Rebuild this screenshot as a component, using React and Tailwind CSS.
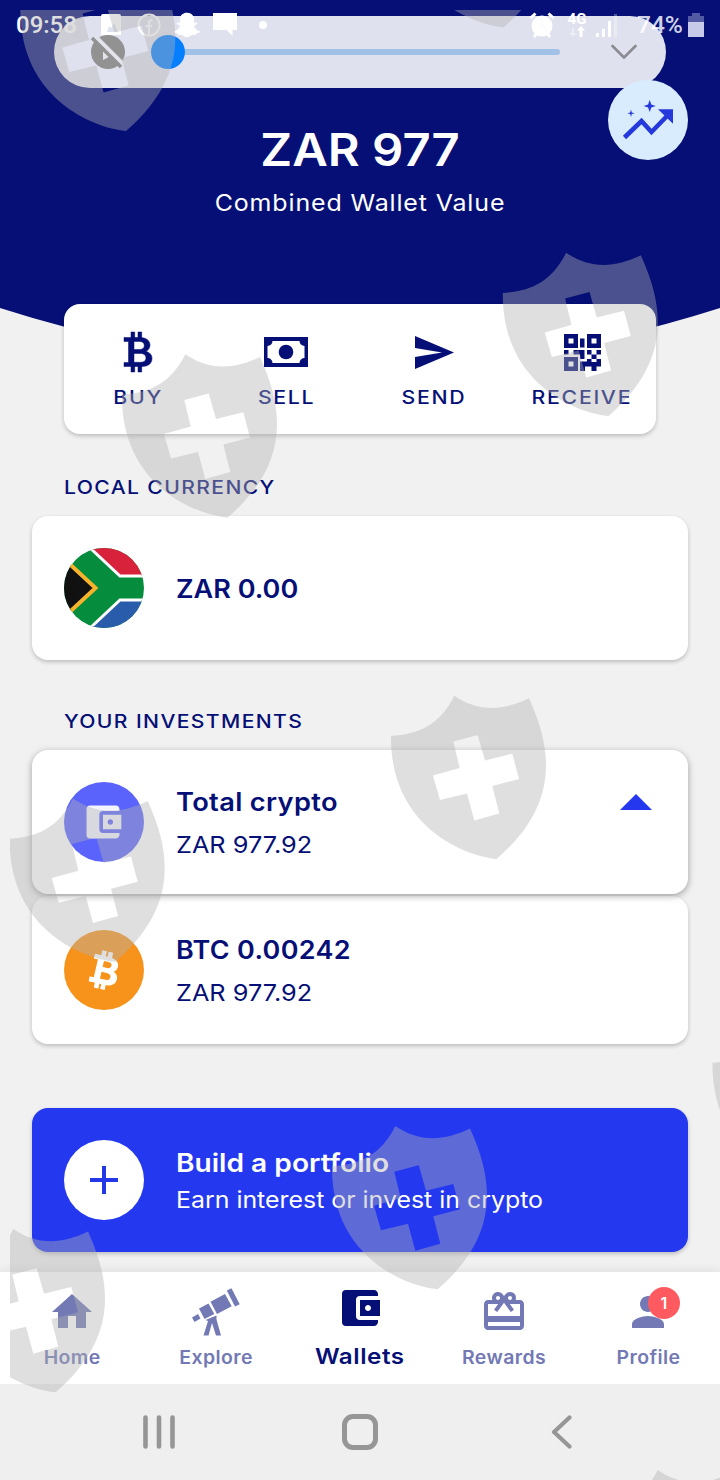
import React from "react";
import { MdHome, MdAccountBalanceWallet, MdCardGiftcard, MdPerson } from "react-icons/md";
import { FaSnapchatGhost } from "react-icons/fa";

const SHIELD =
  "M63.3 0C85 15 110 16.5 138 2.6C149 27 155 48 155 70C155 112 130 142 105.7 163.3C72 160 -1 130 0 40.3C28 38.5 49 29 63.3 0ZM62.3 45.7L68.7 72.3L42 79.7L49 104.3L76 97.7L83.3 124.7L108.3 117.7L101.3 90.3L128 83.3L121.3 58L94 64.7L86.7 39.3Z";

const SHIELDS = [
  [20.3, -32.3], [398, -136], [502.8, 252.7], [122, 354.3], [391, 695.7],
  [9.7, 798.4], [712.5, 1022.4], [332, 1126], [-50, 1229], [594.4, 1470],
];

function Watermark() {
  return (
    <svg className="pointer-events-none absolute inset-0 z-30" width="720" height="1480" viewBox="0 0 720 1480">
      <clipPath id="wm"><rect x="10" y="10" width="710" height="1470" /></clipPath>
      <g clipPath="url(#wm)" fill="#b2b2b2" fillOpacity="0.41" fillRule="evenodd">
        {SHIELDS.map(([x, y]) => (
          <path key={`${x}-${y}`} d={SHIELD} transform={`translate(${x} ${y})`} />
        ))}
      </g>
    </svg>
  );
}

function StatusBar() {
  return (
    <div className="flex h-[50px] items-center font-['Roboto',sans-serif] text-2xl font-medium text-white">
      <span className="ml-4 w-[84px]">09:58</span>
      <svg width="24" height="24" viewBox="0 0 24 24" fill="currentColor" fillRule="evenodd">
        <path d="M3 1h16a2 2 0 0 1 2 2v19H1V3a2 2 0 0 1 2-2zM7 19h11l-4-9-3 5-2-2z" />
      </svg>
      <svg className="ml-[13px]" width="24" height="24" viewBox="0 0 24 24" fill="none" stroke="currentColor" strokeWidth="2">
        <circle cx="12" cy="12" r="10.5" />
        <path d="M12 22V10q0-3 3.500-3M8.500 13h6.500" />
      </svg>
      <FaSnapchatGhost className="ml-[13px]" size={26} />
      <svg className="ml-[13px]" width="24" height="24" viewBox="0 0 24 24" fill="currentColor">
        <path d="M0 0h24v17h-4.500v6l-6-6H0z" />
      </svg>
      <span className="ml-[22px] h-2 w-2 rounded-full bg-white" />
      <svg className="ml-[262px]" width="26" height="26" viewBox="0 0 26 26" stroke="currentColor" fill="none">
        <circle cx="13" cy="14" r="10.500" fill="currentColor" stroke="none" />
        <path d="M1.500 6L6.500 1.500M19.500 1.500L24.500 6M5 25L8 21M21 25L18 21" strokeWidth="3" />
        <path d="M13 8V14.500L18 17" stroke="#dfe0ec" strokeWidth="2.600" />
      </svg>
      <span className="ml-[12px] flex w-[20px] flex-col items-center">
        <span className="text-[15px] leading-[13px] font-bold">4G</span>
        <svg width="16" height="12" viewBox="0 0 16 12" fill="currentColor">
          <path d="M4 11L0.500 7H3V2h2v5h2.500z" opacity=".4" />
          <path d="M12 0l4 4.500h-2.500V11h-3V4.500H8z" />
        </svg>
      </span>
      <svg className="ml-[8px]" width="24" height="24" viewBox="0 0 24 24" fill="currentColor">
        <path d="M1 20h3v4H1zM7 16h3v8H7zM13 8h3v16h-3z" />
        <path d="M19 1h3v23h-3z" opacity=".3" />
      </svg>
      <span className="ml-[18px] w-[49px] text-[24.5px] text-[#cfd1e8]">74%</span>
      <svg className="ml-[2px]" width="16" height="24" viewBox="0 0 16 24" fill="#c8caea">
        <path d="M4 0h8v3h4v6H0V3h4z" opacity=".4" />
        <path d="M0 9h16v15H0z" />
      </svg>
    </div>
  );
}

function VolumePill() {
  return (
    <div className="absolute top-4 left-[54px] z-10 flex h-[72px] w-[612px] items-center rounded-full bg-white/88">
      <svg className="ml-[36px]" width="36" height="36" viewBox="0 0 36 36">
        <circle cx="18" cy="18" r="17" fill="#929292" />
        <path d="M13 14l12 6-12 6z" fill="#e3e3ec" />
        <path d="M5 2L34 31" stroke="#e3e3ec" strokeWidth="4" />
        <path d="M2 4L31 33" stroke="#929292" strokeWidth="3.500" />
      </svg>
      <span className="ml-[25px] h-[34px] w-[34px] shrink-0 rounded-full bg-[#067fff]" />
      <span className="h-1.5 w-[375px] rounded-r-full bg-[#a1c1e6]" />
      <svg className="ml-[50px]" width="28" height="16" viewBox="0 0 28 16" fill="none" stroke="#8c8c94" strokeWidth="2.700" strokeLinecap="round" strokeLinejoin="round">
        <path d="M2.500 2L14 13.500L25.500 2" />
      </svg>
    </div>
  );
}

function InsightsButton() {
  return (
    <div className="absolute top-20 left-[608px] z-20 h-20 w-20 rounded-full bg-[#d9ecfe]">
      <svg width="80" height="80" viewBox="0 0 80 80">
        <path d="M16.500 57.500L33.500 41L43.500 52L60 35" fill="none" stroke="#2538dc" strokeWidth="4.600" />
        <path d="M50 29.300h15v14.500z" fill="#2538dc" />
        <path d="M41.700 20l1.600 4.400 4.400 1.600-4.400 1.600-1.600 4.400-1.600-4.400-4.400-1.600 4.400-1.600z" fill="#2538dc" />
        <path d="M23 29.500l.8 3 3 .8-3 .8-.8 3-.8-3-3-.8 3-.8z" fill="#2538dc" />
      </svg>
    </div>
  );
}

function BitcoinSign({ width, height, weight = 0, className }) {
  return (
    <svg className={className} width={width} height={height} viewBox="-1 -1 30 42" fill="currentColor" stroke="currentColor" strokeWidth={weight}>
      <path
        fillRule="evenodd"
        d="M0 5.500H16C22 5.500 26 8.500 26 13C26 16 24.500 18 22 19.300C26 20.500 28 23 28 26.500C28 31.500 24 34.500 18 34.500H0V30.500H4.500V9.500H0ZM10 9.500V17.500H15.500C18.500 17.500 20.300 16 20.300 13.500C20.300 11 18.500 9.500 15.500 9.500ZM10 21.500V30.300H16.500C20 30.300 22 28.800 22 26C22 23 20 21.500 16.500 21.500Z"
      />
      <path d="M7 0h3.700v6H7zM14 0h3.700v6H14zM7 34h3.700v6H7zM14 34h3.700v6H14z" />
    </svg>
  );
}

function CashIcon() {
  return (
    <svg width="44" height="30" viewBox="0 0 44 30">
      <path d="M0 0h44v30H0z" fill="#050f76" />
      <path d="M8.500 4h27a5 5 0 0 0 5 5v12a5 5 0 0 0-5 5h-27a5 5 0 0 0-5-5V9a5 5 0 0 0 5-5z" fill="#fff" />
      <circle cx="22" cy="15" r="7.300" fill="#050f76" />
    </svg>
  );
}

function SendIcon() {
  return (
    <svg width="39" height="33" viewBox="0 0 39 33" fill="#050f76">
      <path d="M0 0L39 16.500L0 33V21L27 16.500L0 12z" />
    </svg>
  );
}

function QrIcon() {
  return (
    <svg width="37" height="37" viewBox="0 0 37 37" fill="#050f76" fillRule="evenodd">
      <path d="M0 0h14v14H0zM4.500 4.500v5h5v-5zM23 0h14v14H23zM27.500 4.500v5h5v-5zM0 23h14v14H0zM4.500 27.500v5h5v-5z" />
      <path d="M16 4.500h4.500v9H16zM0 16h4.500v4.500H0zM9.500 16h11v9H16v-4.500H9.500zM23 16h4.500v4.500H23zM32.500 16H37v4.500h-4.500zM27.500 20.500h5V25h-5zM23 25h4.500v3H32.500v-3H37v7.500h-4.500V37h-5v-4.500h-6.500V37H16v-9.500h7z" />
    </svg>
  );
}

function Action({ icon, label }) {
  return (
    <div className="flex w-[148px] flex-col items-center pt-[22px]">
      <div className="flex h-[52px] items-center justify-center">{icon}</div>
      <span className="mt-[8px] -mr-[0.5px] scale-x-[1.12] text-[19px] leading-6 font-medium tracking-[1.5px]">{label}</span>
    </div>
  );
}

function SectionTitle({ children }) {
  return <h2 className="ml-16 w-fit origin-left scale-x-[1.11] text-[19px] leading-6 font-medium tracking-[1.25px]">{children}</h2>;
}

function FlagIcon() {
  return (
    <svg width="80" height="80" viewBox="0 0 80 80">
      <clipPath id="flag"><circle cx="40" cy="40" r="40" /></clipPath>
      <g clipPath="url(#flag)">
        <path d="M0 0h80v80H0z" fill="#058c3c" />
        <path d="M26 0L56 28H80V0z" fill="#d8213b" />
        <path d="M26 80L56 52H80V80z" fill="#2a5cac" />
        <path d="M25 -1L56 28H80M25 81L56 52H80" fill="none" stroke="#fff" strokeWidth="3" />
        <path d="M-3 8L31.500 40L-3 72z" fill="#111" stroke="#f7b32b" strokeWidth="4" />
      </g>
    </svg>
  );
}

function TelescopeIcon() {
  return (
    <svg width="48" height="48" viewBox="0 0 48 48" fill="#7279b4">
      <path d="M34.800 2.500L39.500 0.300L47.700 16.200L43 18.500z" />
      <path d="M18.500 13.800L33 6L39.700 18.300L25 26z" />
      <path d="M7 20.500L16.500 15.500L22.300 26L12.500 31z" />
      <path d="M0 29.500L6 26L8.500 30.500L2.500 34z" />
      <path d="M13.500 32L24.500 27.500V31.500L29 47.500H24L20 35L16.500 47.500H11.500L16 33z" />
    </svg>
  );
}

function NavItem({ icon, label, active }) {
  return (
    <div className={active ? "flex w-36 flex-col items-center pt-3 text-[#050f76]" : "flex w-36 flex-col items-center pt-4 text-[#7279b4]"}>
      {icon}
      <span className={active ? "mt-[10px] scale-x-[1.1] text-[22px] leading-7 font-semibold tracking-[0.5px]" : "mt-[7px] scale-x-[1.05] text-[18.5px] leading-7 font-semibold tracking-[0.4px]"}>{label}</span>
    </div>
  );
}

const cardShadow = "shadow-[0_2px_4px_rgba(0,0,0,0.22)]";

export default function App() {
  return (
    <div className="relative flex h-[1480px] w-[720px] flex-col overflow-hidden bg-[#f1f1f1] font-['Inter',sans-serif] text-[#050f76]">
      <svg className="absolute top-0 left-0" width="720" height="370" viewBox="0 0 720 370">
        <path d="M0 0H720V308Q360 423 0 308Z" fill="#050f76" />
      </svg>
      <header className="relative h-[304px] text-white">
        <StatusBar />
        <h1 className="mt-[72px] scale-x-[1.088] text-center text-[45px] leading-[56px] font-semibold">ZAR 977</h1>
        <p className="mt-[11px] scale-x-[1.085] text-center text-[23px] leading-7 tracking-[0.8px]">Combined Wallet Value</p>
      </header>
      <VolumePill />
      <InsightsButton />

      <section className={`relative mx-16 flex h-[130px] rounded-2xl bg-white ${cardShadow}`}>
        <Action label="BUY" icon={<BitcoinSign width={30} height={42} weight={0.5} />} />
        <Action label="SELL" icon={<CashIcon />} />
        <Action label="SEND" icon={<SendIcon />} />
        <Action label="RECEIVE" icon={<QrIcon />} />
      </section>

      <div className="mt-[42px]"><SectionTitle>LOCAL CURRENCY</SectionTitle></div>
      <section className={`mx-8 mt-[16px] flex h-36 items-center gap-8 rounded-2xl bg-white px-8 ${cardShadow}`}>
        <FlagIcon />
        <span className="mt-[3px] origin-left scale-x-[1.08] text-[25px] font-semibold">ZAR 0.00</span>
      </section>

      <div className="mt-[50px]"><SectionTitle>YOUR INVESTMENTS</SectionTitle></div>
      <section className="relative mx-8 mt-[16px] flex h-36 gap-8 rounded-2xl bg-white px-8 pt-8 shadow-[0_2px_7px_rgba(0,0,0,0.35)]">
        <div className="flex h-20 w-20 items-center justify-center rounded-full bg-[#5a63fb] text-[#f4f4ff]">
          <MdAccountBalanceWallet className="-translate-x-px" size={44} />
        </div>
        <div className="flex flex-1 flex-col items-start pt-0.5">
          <span className="origin-left scale-x-[1.09] text-[25px] leading-9 font-semibold tracking-[0.3px]">Total crypto</span>
          <span className="mt-[9px] origin-left scale-x-[1.1] text-[23px] leading-8">ZAR 977.92</span>
        </div>
        <svg className="mt-3 mr-1" width="32" height="16" viewBox="0 0 32 16"><path d="M0 16L16 0L32 16z" fill="#2538f0" /></svg>
      </section>
      <section className={`mx-8 mt-0.5 flex h-[148px] gap-8 rounded-2xl bg-white px-8 pt-[34px] ${cardShadow}`}>
        <div className="flex h-20 w-20 items-center justify-center rounded-full bg-[#f7931a] text-white">
          <BitcoinSign className="translate-x-px rotate-[13deg]" width={28} height={39} weight={1.3} />
        </div>
        <div className="flex flex-col items-start pt-0.5">
          <span className="origin-left scale-x-[1.077] text-[25px] leading-9 font-semibold tracking-[0.3px]">BTC 0.00242</span>
          <span className="mt-[9px] origin-left scale-x-[1.1] text-[23px] leading-8">ZAR 977.92</span>
        </div>
      </section>

      <section className={`mx-8 mt-16 flex h-36 gap-8 rounded-2xl bg-[#2438f0] px-8 pt-8 text-white ${cardShadow}`}>
        <div className="flex h-20 w-20 items-center justify-center rounded-full bg-white">
          <svg width="28" height="28" viewBox="0 0 28 28" stroke="#2438e8" strokeWidth="4"><path d="M14 0V28M0 14H28" /></svg>
        </div>
        <div className="flex flex-col items-start pt-[5px]">
          <span className="origin-left scale-x-[1.125] text-[25px] leading-9 font-semibold">Build a portfolio</span>
          <span className="mt-[3px] origin-left scale-x-[1.082] text-[23px] leading-8">Earn interest or invest in crypto</span>
        </div>
      </section>

      <nav className="mt-5 flex h-28 shrink-0 bg-white shadow-[0_-3px_9px_rgba(0,0,0,0.06)]">
        <NavItem label="Home" icon={<MdHome size={48} />} />
        <NavItem label="Explore" icon={<TelescopeIcon />} />
        <NavItem active label="Wallets" icon={<MdAccountBalanceWallet size={48} />} />
        <NavItem label="Rewards" icon={<MdCardGiftcard size={48} />} />
        <NavItem
          label="Profile"
          icon={
            <span className="relative">
              <MdPerson size={48} />
              <span className="absolute -top-[1px] left-6 flex h-8 w-8 items-center justify-center rounded-full bg-[#ff5a5f] text-base font-semibold text-white">1</span>
            </span>
          }
        />
      </nav>

      <footer className="relative flex h-24 shrink-0 items-center bg-[#efefef]">
        <svg className="ml-[142px]" width="34" height="34" viewBox="0 0 34 34" stroke="#969696" strokeWidth="4.600" strokeLinecap="round">
          <path d="M3.500 2.500V31.500M17 2.500V31.500M30.500 2.500V31.500" />
        </svg>
        <span className="ml-[166px] h-9 w-9 rounded-[11px] border-[5px] border-[#969696]" />
        <svg className="ml-[173px]" width="22" height="34" viewBox="0 0 22 34" fill="none" stroke="#969696" strokeWidth="4.200" strokeLinecap="round" strokeLinejoin="round">
          <path d="M18.500 2.500L3 17L18.500 31.500" />
        </svg>
      </footer>
      <Watermark />
    </div>
  );
}
